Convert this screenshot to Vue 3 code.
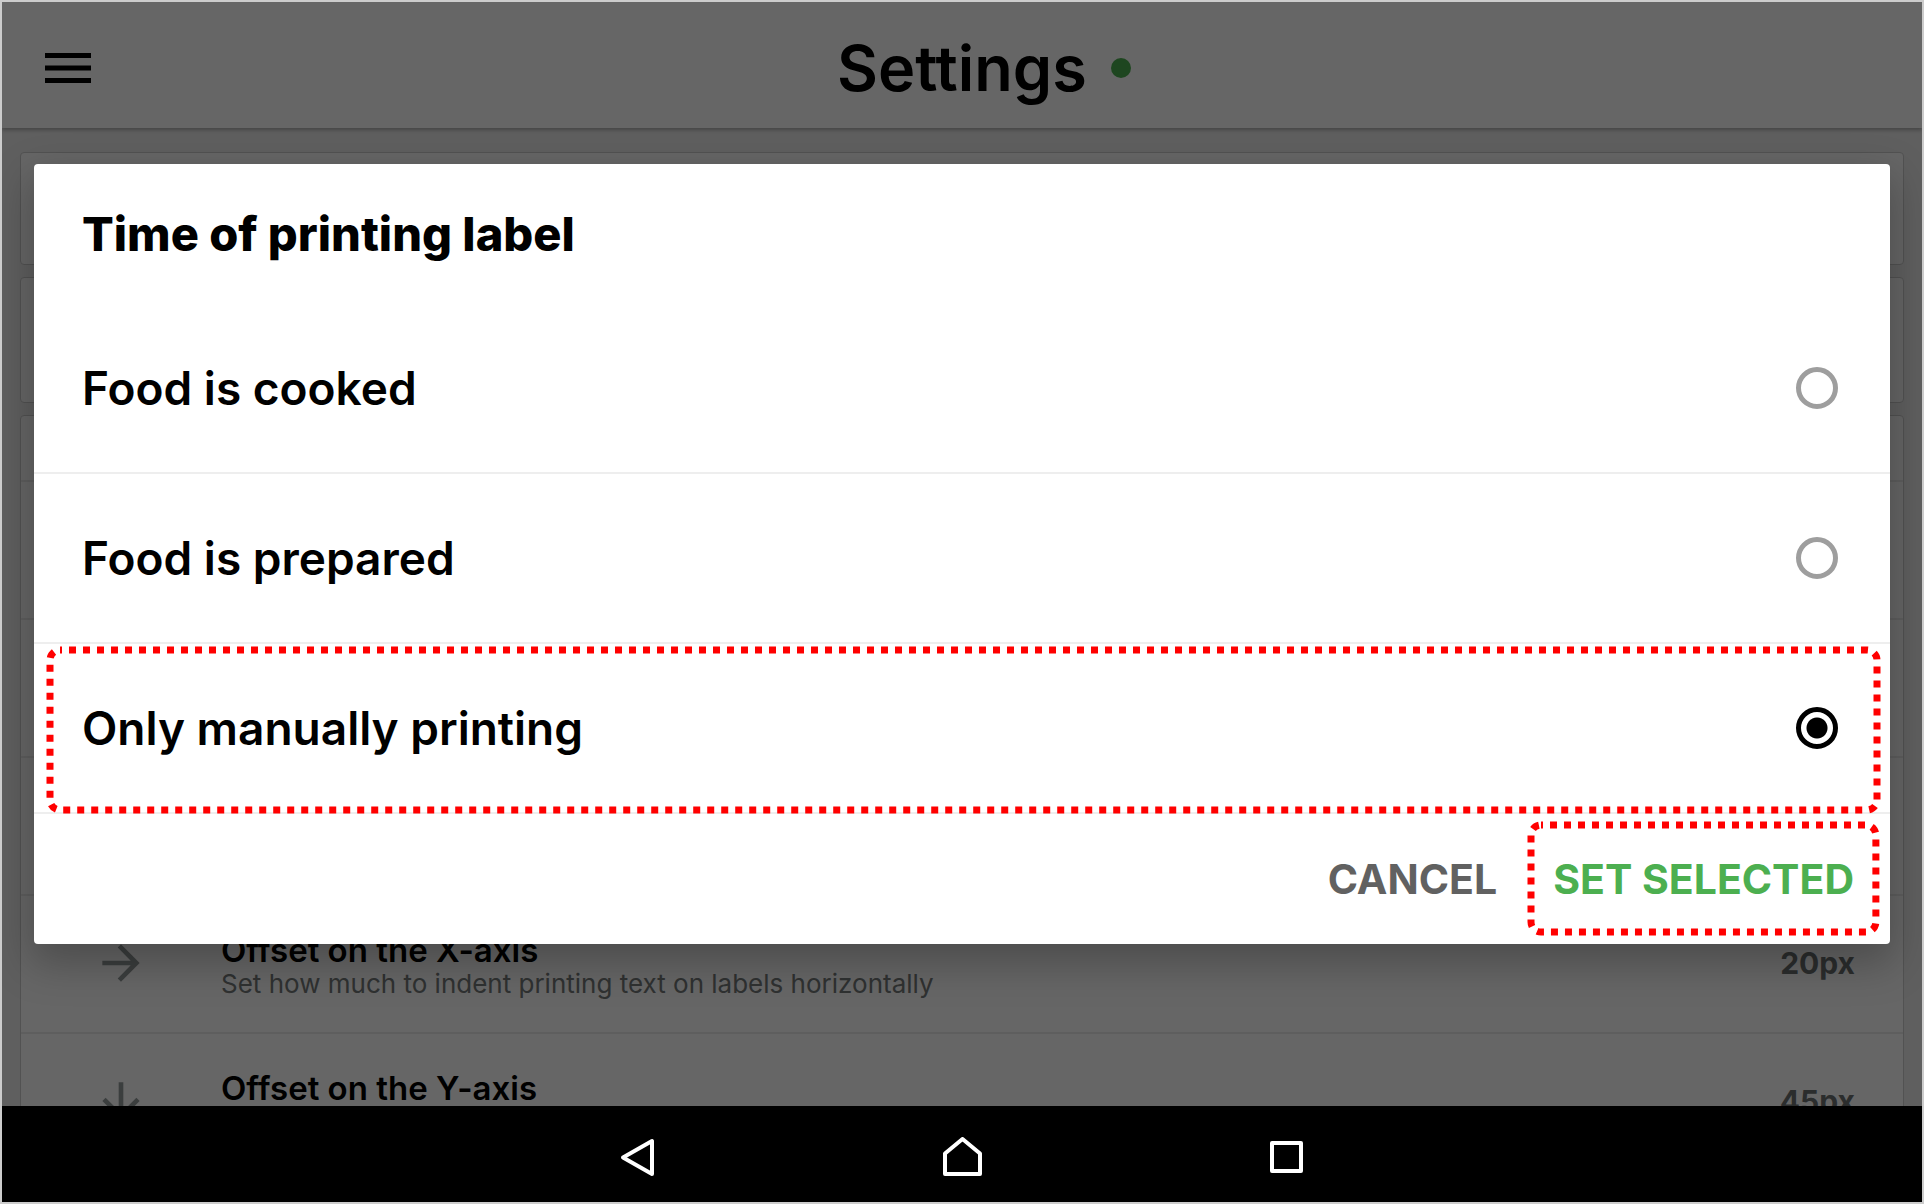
<script setup>
import { ref } from 'vue'

const options = ['Food is cooked', 'Food is prepared', 'Only manually printing']
const selected = ref('Only manually printing')
const offsets = [
  {
    title: 'Offset on the X-axis',
    hint: 'Set how much to indent printing text on labels horizontally',
    value: '20px',
    icon: 'M12 4l-1.41 1.41L16.17 11H4v2h12.17l-5.58 5.59L12 20l8-8z',
  },
  {
    title: 'Offset on the Y-axis',
    hint: 'Set how much to indent printing text on labels vertically',
    value: '45px',
    icon: 'M20 12l-1.41-1.41L13 16.17V4h-2v12.17l-5.58-5.59L4 12l8 8z',
  },
]
</script>

<template>
  <div class="device">
    <div class="app">
      <header class="bar">
        <button class="menu" type="button" aria-label="Menu">
          <svg viewBox="0 0 46 30" width="46" height="30">
            <path d="M0 0h46v5H0zM0 12.5h46v5H0zM0 25h46v5H0z" />
          </svg>
        </button>
        <h1>Settings</h1>
        <span class="status"></span>
      </header>
      <main class="list">
        <section class="card short"></section>
        <section class="card tall"></section>
        <section class="card">
          <div class="row head"></div>
          <div class="row"></div>
          <div class="row"></div>
          <div class="row"></div>
          <div v-for="o in offsets" :key="o.title" class="row">
            <svg class="row-icon" viewBox="0 0 24 24"><path :d="o.icon" /></svg>
            <div class="row-text">
              <h3>{{ o.title }}</h3>
              <p>{{ o.hint }}</p>
            </div>
            <span class="row-value">{{ o.value }}</span>
          </div>
        </section>
      </main>

      <div class="scrim">
        <form class="dialog" @submit.prevent>
          <h2>Time of printing label</h2>
          <label v-for="o in options" :key="o" class="option">
            <span>{{ o }}</span>
            <input v-model="selected" type="radio" name="print-time" :value="o" />
            <svg v-if="selected === o" class="marker row-marker">
              <rect x="0" y="0" width="100%" height="100%" rx="10" />
            </svg>
          </label>
          <footer>
            <button class="action" type="button">CANCEL</button>
            <button class="action primary" type="submit">
              SET SELECTED
              <svg class="marker button-marker">
                <rect x="0" y="0" width="100%" height="100%" rx="10" />
              </svg>
            </button>
          </footer>
        </form>
      </div>
    </div>

    <nav class="system">
      <button type="button" aria-label="Back">
        <svg viewBox="0 0 40 40"><path d="M34 4v33L5 20.500z" /></svg>
      </button>
      <button type="button" aria-label="Home">
        <svg viewBox="0 0 40 40"><path d="M3 16.500L20.500 2l17.500 14.500V37H3z" /></svg>
      </button>
      <button type="button" aria-label="Recent apps">
        <svg viewBox="0 0 40 40"><path d="M6 6h29v28H6z" /></svg>
      </button>
    </nav>
  </div>
</template>

<style>
body {
  margin: 0;
}
</style>

<style scoped>
* {
  box-sizing: border-box;
}
.device {
  display: flex;
  flex-direction: column;
  height: 100vh;
  border: 2px solid #ccc;
  font-family: Inter, 'Open Sans', sans-serif;
  color: #000;
}
h1,
h2,
h3,
p {
  margin: 0;
}
button {
  border: 0;
  padding: 0;
  background: none;
  font: inherit;
  cursor: pointer;
}
.app {
  position: relative;
  display: flex;
  flex-direction: column;
  flex: 1;
  min-height: 0;
  overflow: hidden;
  background: #eee;
}
.bar {
  display: grid;
  grid-template-columns: 1fr auto 1fr;
  align-items: center;
  flex: none;
  height: 126px;
  padding: 6px 43px 0;
  background: #fff;
  box-shadow: 0 2px 4px rgba(0, 0, 0, 0.3);
}
.menu {
  justify-self: start;
  height: 30px;
}
.menu svg {
  display: block;
}
h1 {
  font-size: 63px;
  line-height: 72px;
  font-weight: 600;
}
.status {
  width: 20px;
  height: 20px;
  margin-left: 24px;
  border-radius: 50%;
  background: #4caf50;
}
.list {
  display: flex;
  flex-direction: column;
  gap: 12px;
  padding: 24px 18px 0;
}
.card {
  flex: none;
  border: 1px solid #ccc;
  border-radius: 4px;
  background: #fff;
}
.short {
  height: 113px;
}
.tall {
  height: 126px;
}
.row {
  display: flex;
  align-items: center;
  height: 138px;
  padding: 0 48px 2px 72px;
  border-bottom: 2px solid #eaeaea;
}
.head {
  height: 66px;
}
.row-icon {
  width: 56px;
  height: 56px;
  fill: #959c9c;
}
.row-text {
  flex: 1;
  margin-left: 72px;
  padding-top: 4px;
}
h3 {
  font-size: 33px;
  line-height: 38px;
  font-weight: 600;
}
.row-text p {
  font-size: 26px;
  line-height: 30px;
  color: #757a7a;
}
.row-value {
  font-size: 30px;
  line-height: 36px;
  font-weight: 700;
  color: #6b7070;
}
.scrim {
  position: absolute;
  inset: 0;
  display: flex;
  align-items: center;
  padding: 0 32px;
  background: rgba(0, 0, 0, 0.6);
}
.dialog {
  width: 100%;
  border-radius: 4px;
  background: #fff;
  box-shadow: 0 16px 40px 4px rgba(0, 0, 0, 0.25);
}
h2 {
  height: 140px;
  padding: 0 48px;
  font-size: 47px;
  line-height: 140px;
  font-weight: 800;
}
.option {
  position: relative;
  display: flex;
  align-items: center;
  justify-content: space-between;
  height: 170px;
  padding: 0 52px 0 48px;
  border-bottom: 2px solid #eee;
  font-size: 46px;
  line-height: 52px;
  font-weight: 600;
}
.option input {
  appearance: none;
  width: 42px;
  height: 42px;
  margin: 0;
  border: 5px solid #9e9e9e;
  border-radius: 50%;
}
.option input:checked {
  border-color: #000;
  background: radial-gradient(circle, #000 10px, transparent 11px);
}
footer {
  display: flex;
  align-items: center;
  justify-content: flex-end;
  gap: 56px;
  height: 130px;
  padding: 0 36px;
}
.action {
  position: relative;
  font-size: 41px;
  line-height: 48px;
  font-weight: 700;
  color: #616161;
}
.primary {
  color: #4caf50;
}
.marker {
  position: absolute;
  overflow: visible;
  pointer-events: none;
}
.marker rect {
  fill: none;
  stroke: #f00;
  stroke-width: 7px;
  stroke-dasharray: 7 7;
  stroke-dashoffset: 5px;
}
.row-marker {
  top: 6px;
  left: 16px;
  width: calc(100% - 29px);
  height: 160px;
}
.button-marker {
  top: -30px;
  left: -22px;
  width: calc(100% + 44px);
  height: 107px;
}
.system {
  display: flex;
  align-items: center;
  justify-content: center;
  gap: 284px;
  flex: none;
  height: 96px;
  padding-top: 5px;
  background: #000;
}
.system svg {
  display: block;
  width: 40px;
  height: 40px;
  fill: none;
  stroke: #fff;
  stroke-width: 4px;
  stroke-linejoin: round;
}
</style>
